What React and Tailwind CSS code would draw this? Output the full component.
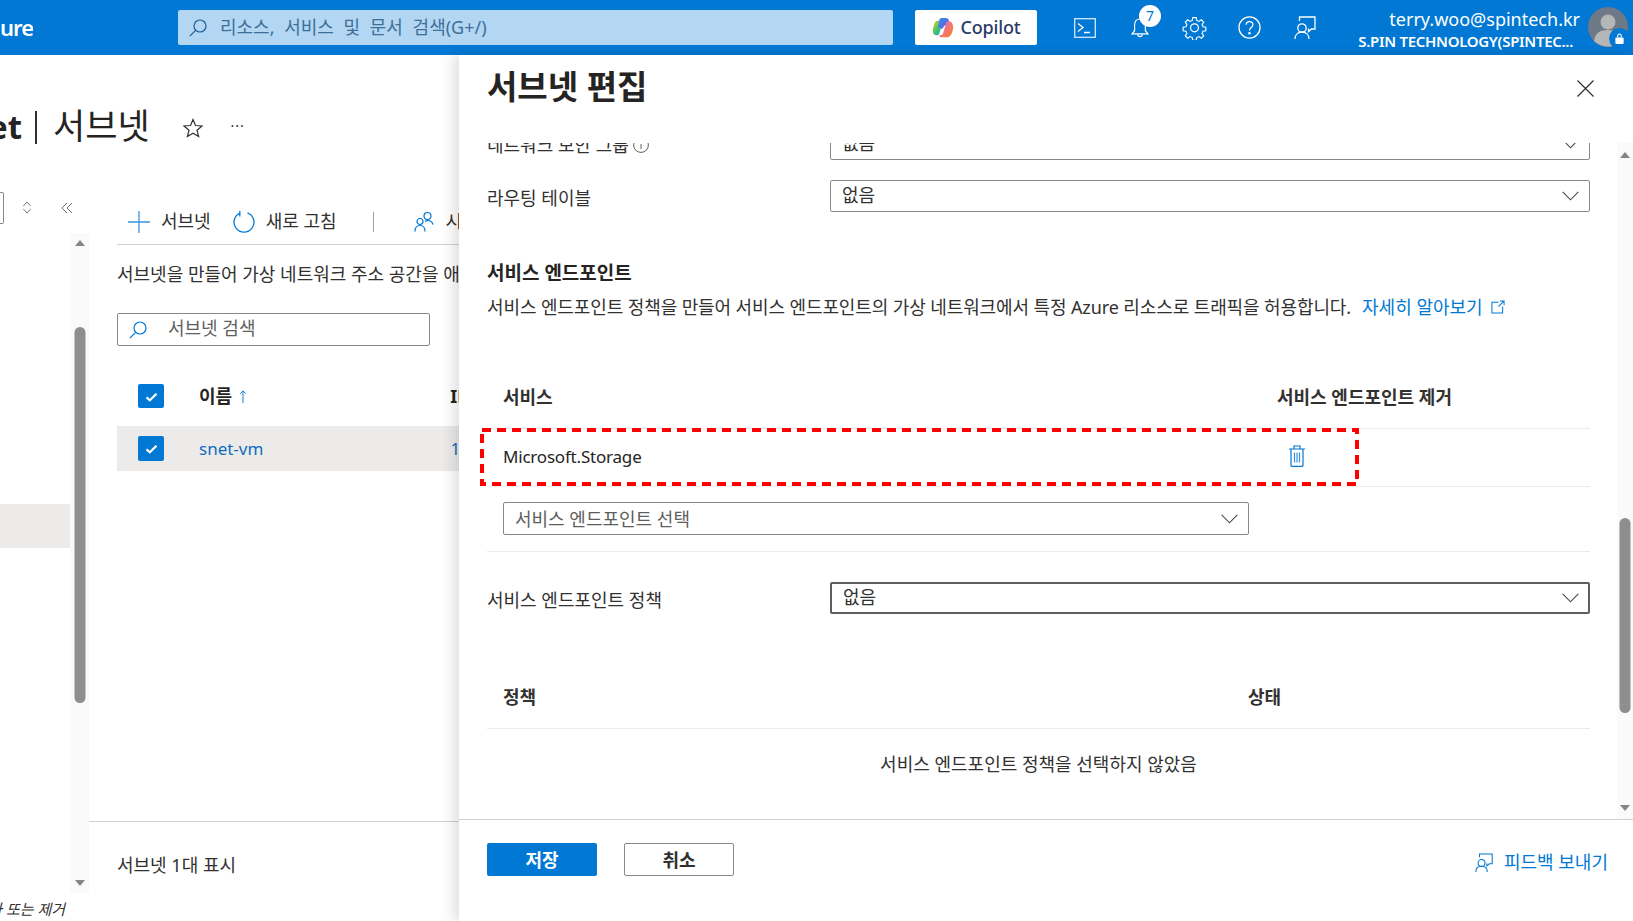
import { useState } from 'react'

const Chevron = ({ className = 'w-[17px] h-[10px] shrink-0' }) => (
  <svg viewBox="0 0 17 10" className={className} fill="none" stroke="#484644" strokeWidth="1.1">
    <path d="M0.7 0.8 8.5 8.8 16.3 0.8" />
  </svg>
)

const Search = ({ color = '#0078d4', className = 'w-[18px] h-[18px] shrink-0' }) => (
  <svg viewBox="0 0 18 18" className={className} fill="none" stroke={color} strokeWidth="1.2">
    <circle cx="11" cy="7" r="6" />
    <path d="M6.6 11.4 0.8 17.2" />
  </svg>
)

const Feedback = ({ color = 'white', className = 'w-[22px] h-[24px] shrink-0' }) => (
  <svg viewBox="0 0 22 24" className={className} fill="none" stroke={color} strokeWidth="1.3">
    <path d="M5.5 5V1h15.5v12h-3.5l-3 2.5V12.5" />
    <circle cx="8" cy="12" r="4.2" />
    <path d="M1 23c0-4.4 3-7 7-7s7 2.6 7 7" />
  </svg>
)

const CheckBox = ({ h = 'h-[24px]' }) => (
  <div className={`w-[26px] ${h} bg-[#0078d4] rounded-[2px] flex items-center justify-center`}>
    <svg viewBox="0 0 14 12" className="w-[13px] h-[10px] mt-[1px]" fill="none" stroke="white" strokeWidth="2.6">
      <path d="M1 6.5 5 10 13 2" />
    </svg>
  </div>
)

const Select = ({ text, className, muted, focused }) => (
  <div
    className={`flex items-center justify-between rounded-[2px] bg-white pl-[11px] ${
      focused ? 'border-2 border-[#605e5c] pr-[9px]' : 'border border-[#8a8886] pr-[10px]'
    } ${className}`}
  >
    <span className={`text-[18px] leading-[22px] ${muted ? 'text-[#605e5c]' : '-mt-[2px] text-[#323130]'}`}>{text}</span>
    <Chevron />
  </div>
)

function TopBar() {
  return (
    <header className="h-[55px] shrink-0 bg-[#0078d4] flex items-center text-white">
      <div className="w-[33px] h-full flex items-center justify-end overflow-hidden">
        <span className="text-[22px] font-semibold tracking-[-1px] whitespace-nowrap">ure</span>
      </div>
      <div className="ml-[145px] w-[715px] h-[35px] rounded-[2px] bg-[#b3d6f2] flex items-center pl-[11px]">
        <Search color="#1d5c92" />
        <span className="ml-[13px] text-[18px] text-[#3d6f99] whitespace-nowrap [word-spacing:5px]">리소스, 서비스 및 문서 검색(G+/)</span>
      </div>
      <div className="ml-[22px] w-[122px] h-[35px] rounded-[2px] bg-white flex items-center justify-center gap-[7px]">
        <svg viewBox="0 0 24 24" className="w-[22px] h-[22px] shrink-0">
          <defs>
            <linearGradient id="cpA" x1="0" y1="0" x2="1" y2="1">
              <stop offset="0" stopColor="#2e8df0" />
              <stop offset="1" stopColor="#7b4fe0" />
            </linearGradient>
            <linearGradient id="cpB" x1="0" y1="0" x2="1" y2="1">
              <stop offset="0" stopColor="#f5d020" />
              <stop offset="0.5" stopColor="#3fc46a" />
              <stop offset="1" stopColor="#1f9fd8" />
            </linearGradient>
            <linearGradient id="cpC" x1="0" y1="0" x2="1" y2="1">
              <stop offset="0" stopColor="#e86ad0" />
              <stop offset="1" stopColor="#f58220" />
            </linearGradient>
          </defs>
          <path d="M5 20c-3 0-4-2-4-5 0-5 2-10 4-11h7L8 18c-.4 1.4-1.4 2-3 2Z" fill="url(#cpB)" />
          <path d="M8 3c.5-1.300 1.500-2 3-2h4c2 0 3 1 3.500 3L20 10l-6-1-3 4-4-2Z" fill="url(#cpA)" />
          <path d="M16 5h3c2.500 0 4 3 4 6 0 5-2.500 10-5 11h-8c-1.500 0-2.500-1-2-2h1c1.500 0 2.500-.7 3-2Z" fill="url(#cpC)" />
        </svg>
        <span className="text-[18px] font-medium text-[#2b3a67] tracking-[-0.2px]">Copilot</span>
      </div>
      <div className="ml-[20px] flex items-center">
        <div className="w-[55px] flex justify-center">
          <svg viewBox="0 0 22 20" className="w-[22px] h-[20px]" fill="none" stroke="#d4e8f8" strokeWidth="1.3">
            <rect x="0.7" y="0.7" width="20.600" height="18.600" />
            <path d="M4 5.500 9 9.500 4 13.500M10 14.500h6" stroke="white" />
          </svg>
        </div>
        <div className="relative w-[55px] flex justify-center">
          <svg viewBox="0 0 20 24" className="w-[18px] h-[22px]" fill="none" stroke="white" strokeWidth="1.3">
            <path d="M10 2C6 2 4 5 4 9v6l-2.800 3.500h17.600L16 15V9c0-4-2-7-6-7Z" />
            <path d="M7.500 19a2.500 2.500 0 0 0 5 0" />
          </svg>
          <div className="absolute left-[27px] -top-[12px] w-[22px] h-[22px] rounded-full bg-white text-[#0078d4] text-[14px] leading-[22px] text-center">7</div>
        </div>
        <div className="w-[55px] flex justify-center">
          <svg viewBox="0 0 24 24" className="w-[25px] h-[25px]" fill="none" stroke="white" strokeWidth="1.200">
            <path d="M10.200 1.500h3.600l.6 3 2.300 1 2.600-1.700 2.500 2.500-1.700 2.600 1 2.300 3 .6v3.600l-3 .6-1 2.300 1.700 2.600-2.500 2.500-2.600-1.700-2.300 1-.6 3h-3.600l-.6-3-2.300-1-2.600 1.700-2.500-2.500 1.700-2.600-1-2.300-3-.6v-3.600l3-.6 1-2.300-1.700-2.600 2.500-2.500 2.600 1.700 2.300-1Z" transform="translate(1.200 1.200) scale(0.9)" />
            <circle cx="12" cy="12.300" r="3.800" />
          </svg>
        </div>
        <div className="w-[55px] flex justify-center">
          <svg viewBox="0 0 24 24" className="w-[23px] h-[23px]" fill="none" stroke="white" strokeWidth="1.300">
            <circle cx="12" cy="12" r="11" />
            <path d="M8.500 9.200c0-2 1.500-3.300 3.500-3.300s3.500 1.300 3.500 3.200c0 3-3.500 2.800-3.500 6" />
            <circle cx="12" cy="18" r="0.700" fill="white" />
          </svg>
        </div>
        <div className="w-[55px] flex justify-center">
          <Feedback />
        </div>
      </div>
      <div className="flex-1 flex flex-col items-end pr-[8px] leading-none mt-[3px]">
        <span className="text-[18px] leading-[22px]">terry.woo@spintech.kr</span>
        <span className="text-[15px] leading-[20px] font-semibold tracking-[-0.3px] mr-[7px] mt-[1px] whitespace-nowrap">S.PIN TECHNOLOGY(SPINTEC...</span>
      </div>
      <div className="relative w-[45px] h-[40px] shrink-0 overflow-hidden -mt-[1px]">
        <svg viewBox="0 0 40 40" className="w-[40px] h-[40px]">
          <circle cx="20" cy="20" r="20" fill="#6e7987" />
          <circle cx="20" cy="15" r="7.500" fill="#b4b6b8" />
          <path d="M6 34c1-8 6-11 14-11s13 3 14 11a20 20 0 0 1-28 0Z" fill="#b4b6b8" />
        </svg>
        <div className="absolute left-[21px] top-[21px] w-[21px] h-[21px] rounded-full bg-[#0078d4] flex items-center justify-center">
          <svg viewBox="0 0 12 14" className="w-[11px] h-[13px]" fill="white">
            <path d="M3.500 6V4a2.500 2.500 0 0 1 5 0v2h-1.200V4a1.300 1.300 0 0 0-2.600 0v2Z" />
            <rect x="1.500" y="6" width="9" height="7" rx="1" />
          </svg>
        </div>
      </div>
    </header>
  )
}

function Scrollbar({ thumbTop, thumbHeight, className, arrowTop = 7, arrowBottom = 7 }) {
  return (
    <div className={`bg-[#fafafa] relative shrink-0 ${className}`}>
      <div className="absolute left-1/2 -translate-x-1/2 w-0 h-0 border-x-[5px] border-x-transparent border-b-[6px] border-b-[#858585]" style={{ top: arrowTop }} />
      <div className="absolute left-1/2 -translate-x-1/2 w-[11px] rounded-full bg-[#8e8e8e]" style={{ top: thumbTop, height: thumbHeight }} />
      <div className="absolute left-1/2 -translate-x-1/2 w-0 h-0 border-x-[5px] border-x-transparent border-t-[6px] border-t-[#858585]" style={{ bottom: arrowBottom }} />
    </div>
  )
}

function Blade() {
  return (
    <div className="w-[459px] shrink-0 h-full overflow-hidden flex flex-col relative">
      <div className="h-[136px] shrink-0 flex items-center whitespace-nowrap text-[#252423] -mt-[1px] pt-[10px]">
        <span className="w-[22px] flex justify-end overflow-hidden text-[33px] font-bold">et</span>
        <span className="ml-[13px] w-[2px] h-[33px] bg-[#323130]" />
        <span className="ml-[16px] text-[35px] font-normal leading-none -mt-[3px]">서브넷</span>
        <svg viewBox="0 0 20 20" className="ml-[33px] w-[20px] h-[20px] mt-[1px] shrink-0" fill="none" stroke="#323130" strokeWidth="1.200">
          <path d="M10 1.500 12.500 7.500 19 8 14 12.200 15.600 18.600 10 15.200 4.400 18.600 6 12.200 1 8 7.500 7.500Z" />
        </svg>
        <span className="ml-[28px] text-[14px] text-[#323130] tracking-[1px] -mt-[4px]">···</span>
      </div>
      <div className="flex flex-1 min-h-0">
        <div className="w-[89px] shrink-0 flex flex-col">
          <div className="h-[43px] pb-[8px] shrink-0 flex items-center">
            <div className="w-[4px] h-[32px] border-y border-r border-[#8a8886] rounded-r-[2px]" />
            <svg viewBox="0 0 10 14" className="ml-[18px] w-[10px] h-[13px]" fill="none" stroke="#605e5c" strokeWidth="0.900">
              <path d="M5 1 9 5.500M5 1 1 5.500M5 13 9 8.500M5 13 1 8.500" />
            </svg>
            <svg viewBox="0 0 12 12" className="ml-[29px] w-[12px] h-[12px]" fill="none" stroke="#605e5c" strokeWidth="0.900">
              <path d="M6 1 1 6l5 5M11 1 6 6l5 5" />
            </svg>
          </div>
          <div className="flex flex-1 min-h-0">
            <div className="w-[70px] shrink-0 pt-[271px]">
              <div className="h-[44px] bg-[#edebe9]" />
            </div>
            <Scrollbar className="w-[19px] h-[660px]" thumbTop={94} thumbHeight={376} />
          </div>
          <div className="h-[27px] shrink-0 flex items-center justify-end pr-[24px] pt-[4px] text-[15px] italic text-[#323130] whitespace-nowrap overflow-hidden">가 또는 제거</div>
        </div>
        <div className="flex-1 flex flex-col min-w-0">
          <div className="ml-[28px] h-[56px] shrink-0 flex items-center border-b border-[#d2d0ce] -mt-[1px] pt-[10px] whitespace-nowrap">
            <svg viewBox="0 0 22 22" className="ml-[11px] w-[22px] h-[22px] shrink-0" fill="none" stroke="#3b93dd" strokeWidth="1.300">
              <path d="M11 0v22M0 11h22" />
            </svg>
            <span className="ml-[11px] text-[18px] text-[#323130]">서브넷</span>
            <svg viewBox="0 0 22 22" className="ml-[22px] w-[22px] h-[23px] shrink-0" fill="none" stroke="#0078d4" strokeWidth="1.300">
              <path d="M7.500 2.300A10 10 0 1 0 14.500 2.300M6.800 0.500v5.500" />
            </svg>
            <span className="ml-[11px] text-[18px] text-[#323130]">새로 고침</span>
            <span className="ml-[36px] w-[1px] h-[20px] bg-[#a19f9d] shrink-0" />
            <svg viewBox="0 0 20 20" className="ml-[40px] w-[20px] h-[21px] shrink-0" fill="none" stroke="#0078d4" strokeWidth="1.200">
              <circle cx="6" cy="10" r="3" />
              <circle cx="13.500" cy="4.500" r="3.500" />
              <path d="M1 20c0-4 2-6 5-6s5 2 5 6M11 10c3-2 7-1 8 3" />
            </svg>
            <span className="ml-[12px] text-[18px] text-[#323130]">시</span>
          </div>
          <div className="ml-[28px] mt-[16px] text-[18px] leading-[26px] text-[#323130] whitespace-nowrap overflow-hidden">서브넷을 만들어 가상 네트워크 주소 공간을 애</div>
          <div className="ml-[28px] mt-[26px] w-[313px] h-[33px] border border-[#8a8886] rounded-[2px] flex items-center pl-[11px] shrink-0">
            <Search />
            <span className="ml-[21px] text-[18px] text-[#605e5c] -mt-[2px]">서브넷 검색</span>
          </div>
          <div className="ml-[28px] mt-[38px] h-[24px] flex items-center shrink-0 whitespace-nowrap overflow-hidden">
            <div className="ml-[21px]"><CheckBox /></div>
            <span className="ml-[35px] text-[18px] font-bold text-[#252423]">이름</span>
            <svg viewBox="0 0 8 14" className="ml-[7px] w-[8px] h-[13px] shrink-0" fill="none" stroke="#0078d4" strokeWidth="1">
              <path d="M4 14V1M1 4l3-3 3 3" />
            </svg>
            <span className="ml-[203px] text-[18px] font-bold text-[#252423]">IP</span>
          </div>
          <div className="ml-[28px] mt-[18px] h-[45px] bg-[#edebe9] flex items-center shrink-0 whitespace-nowrap overflow-hidden">
            <div className="ml-[21px]"><CheckBox h="h-[25px]" /></div>
            <span className="ml-[35px] text-[17px] text-[#0f6cbd]">snet-vm</span>
            <span className="ml-[187px] text-[17px] text-[#0f6cbd]">1</span>
          </div>
          <div className="flex-1" />
          <div className="ml-0 h-[100px] border-t border-[#d2d0ce] shrink-0 pl-[28px] pt-[31px] text-[18px] leading-[24px] text-[#323130]">서브넷 1대 표시</div>
        </div>
      </div>
    </div>
  )
}

function EditPanel() {
  const [policy] = useState('없음')
  return (
    <aside className="flex-1 min-w-0 h-full bg-white flex flex-col relative shadow-[-6px_0_12px_rgba(0,0,0,0.12)]">
      <div className="h-[88px] shrink-0 flex items-start justify-between pl-[28px] pr-[32px]">
        <h1 className="text-[33px] leading-[40px] font-bold text-[#252423] mt-[12px]">서브넷 편집</h1>
        <svg viewBox="0 0 17 17" className="w-[17px] h-[17px] mt-[25px] mr-[7px]" fill="none" stroke="#323130" strokeWidth="1.200">
          <path d="M0.500 0.500 16.500 16.500M16.500 0.500 0.500 16.500" />
        </svg>
      </div>

      <div className="flex-1 min-h-0 flex overflow-hidden">
        <div className="flex-1 min-w-0 pl-[28px] pr-[27px] text-[#323130]">
          <div className="-mt-[15px] h-[32px] flex items-center">
            <span className="w-[343px] text-[18px] leading-[22px] flex items-center gap-[4px] mt-[2px]">
              네트워크 보안 그룹
              <svg viewBox="0 0 16 16" className="w-[16px] h-[16px]" fill="none" stroke="#605e5c" strokeWidth="1">
                <circle cx="8" cy="8" r="7.400" />
                <path d="M8 7v5M8 4v1.200" />
              </svg>
            </span>
            <Select text="없음" className="flex-1 h-[32px]" />
          </div>

          <div className="mt-[20px] h-[32px] flex items-center">
            <span className="w-[343px] text-[18px] leading-[22px] mt-[3px]">라우팅 테이블</span>
            <Select text="없음" className="flex-1 h-[32px]" />
          </div>

          <h2 className="mt-[48px] text-[19px] leading-[26px] font-bold text-[#252423]">서비스 엔드포인트</h2>
          <p className="mt-[9px] text-[18px] leading-[24px] tracking-[-0.11px] whitespace-nowrap flex items-center">
            서비스 엔드포인트 정책을 만들어 서비스 엔드포인트의 가상 네트워크에서 특정 Azure 리소스로 트래픽을 허용합니다.
            <a className="ml-[11px] text-[#0078d4] flex items-center gap-[8px] tracking-normal">
              자세히 알아보기
              <svg viewBox="0 0 15 15" className="w-[14px] h-[14px]" fill="none" stroke="#0078d4" strokeWidth="1.100">
                <path d="M8 2.500H1v11.500h11.500V7M8 7l6-6M9.500 1h4.500v4.500" />
              </svg>
            </a>
          </p>

          <div className="mt-[47px] h-[63px] grid grid-cols-[774px_1fr] items-center pl-[16px] border-b border-[#edebe9] text-[18px] font-bold text-[#323130]">
            <span>서비스</span>
            <span className="whitespace-nowrap">서비스 엔드포인트 제거</span>
          </div>

          <div className="relative h-[58px] grid grid-cols-[774px_1fr] items-center pl-[16px] border-b border-[#edebe9]">
            <span className="text-[17px] font-normal text-[#252423] tracking-[-0.2px] -mt-[1px]">Microsoft.Storage</span>
            <svg viewBox="0 0 18 22" className="ml-[11px] w-[18px] h-[22px] -mt-[4px]" fill="none" stroke="#0078d4" strokeWidth="1.200">
              <path d="M1 4h16M6 4V1h6v3M3 4v16.500a.8.800 0 0 0 .8.800h10.400a.8.800 0 0 0 .8-.8V4" />
              <path d="M6.500 7.500v10M9 7.500v10M11.500 7.500v10" stroke="#3b93dd" />
            </svg>
            <svg viewBox="0 0 879 58" className="absolute -left-[7px] -top-[1px] w-[879px] h-[58px] pointer-events-none" fill="none">
              <rect x="2" y="2" width="875" height="54" stroke="#ff0000" strokeWidth="4" strokeDasharray="9 6" />
            </svg>
          </div>

          <div className="h-[65px] pt-[15px] pl-[16px] border-b border-[#edebe9]">
            <Select text="서비스 엔드포인트 선택" muted className="w-[746px] h-[33px]" />
          </div>

          <div className="mt-[30px] h-[32px] flex items-center">
            <span className="w-[343px] text-[18px] leading-[22px] mt-[4px]">서비스 엔드포인트 정책</span>
            <Select text={policy} focused className="flex-1 h-[32px]" />
          </div>

          <div className="mt-[52px] h-[63px] grid grid-cols-[745px_1fr] items-center pl-[16px] border-b border-[#edebe9] text-[18px] font-bold">
            <span>정책</span>
            <span>상태</span>
          </div>
          <div className="h-[70px] flex items-center justify-center text-[18px]">서비스 엔드포인트 정책을 선택하지 않았음</div>
        </div>
        <Scrollbar className="w-[16px] h-full" thumbTop={375} thumbHeight={195} arrowTop={9} arrowBottom={8} />
      </div>

      <footer className="h-[102px] shrink-0 border-t border-[#d2d0ce] flex items-start pl-[28px] pr-[25px] pt-[23px]">
        <button className="w-[110px] h-[33px] pt-[1px] rounded-[2px] bg-[#0078d4] text-white text-[18px] font-bold">저장</button>
        <button className="ml-[27px] w-[110px] h-[33px] pt-[1px] rounded-[2px] border border-[#8a8886] text-[#323130] text-[18px] font-bold">취소</button>
        <a className="ml-auto flex items-center gap-[11px] text-[18px] text-[#0078d4] mt-[6px]">
          <Feedback color="#0078d4" className="w-[18px] h-[20px] shrink-0" />
          피드백 보내기
        </a>
      </footer>
    </aside>
  )
}

export default function App() {
  return (
    <div className="w-screen h-screen overflow-hidden flex flex-col bg-white font-['Noto_Sans','Noto_Sans_CJK_KR',sans-serif]">
      <TopBar />
      <main className="flex-1 min-h-0 flex">
        <Blade />
        <EditPanel />
      </main>
    </div>
  )
}
